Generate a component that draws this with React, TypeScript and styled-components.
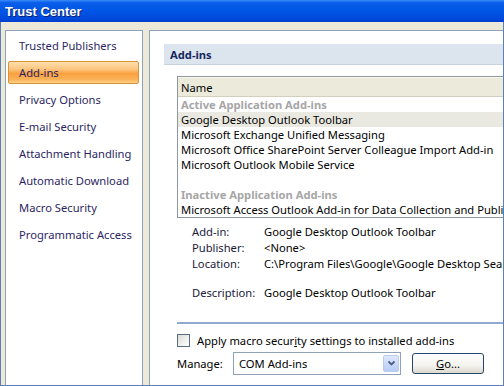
import React from 'react';
import styled, { createGlobalStyle } from 'styled-components';

const GlobalStyle = createGlobalStyle`
  html, body {
    margin: 0;
    padding: 0;
    background: #ece9d8;
  }
  body {
    font-family: 'Noto Sans', 'Open Sans', sans-serif;
    font-size: 11.2px;
    color: #000;
  }
`;

const Window = styled.div`
  width: 504px;
  height: 386px;
  display: flex;
  flex-direction: column;
  overflow: hidden;
`;

const TitleBar = styled.div`
  height: 22px;
  flex: none;
  display: flex;
  align-items: center;
  padding-left: 5px;
  background: linear-gradient(#3a8cf8 0%, #0a5eea 12%, #0055e5 50%, #0049dc 85%, #003ecf 100%);
  color: #fff;
  font-family: 'Liberation Sans', Arial, sans-serif;
  font-weight: bold;
  font-size: 13px;
  text-shadow: 1px 1px 0 #0a1f6b;
`;

const Frame = styled.div`
  flex: 1;
  display: flex;
  gap: 6px;
  padding: 8px 0 0 4px;
  border: 1px solid #5b80b4;
  border-top: none;
  background: #ece9d8;
  overflow: hidden;
  min-height: 0;
`;

const Sidebar = styled.div`
  width: 138px;
  flex: none;
  box-sizing: border-box;
  background: #fff;
  border: 1px solid #8ea3b8;
  border-bottom: none;
  padding: 1px 3px 0 2px;
`;

const NavItem = styled.div<{ $active?: boolean }>`
  height: ${p => (p.$active ? '23px' : '27px')};
  margin: ${p => (p.$active ? '2px 0 2px' : '0')};
  box-sizing: border-box;
  display: flex;
  align-items: center;
  padding-left: 10px;
  color: #2c1f63;
  white-space: nowrap;
  border-radius: 2px;
  border: 1px solid ${p => (p.$active ? '#d8943a' : 'transparent')};
  background: ${p =>
    p.$active
      ? 'linear-gradient(#fde0ad 0%, #fcc47d 35%, #f9a13f 55%, #fbb45a 85%, #fdd18b 100%)'
      : 'transparent'};
`;

const Panel = styled.div`
  flex: 1;
  min-width: 0;
  background: #fff;
  border: 1px solid #8ea3b8;
  border-bottom: none;
  border-right: none;
  padding: 13px 0 0 14px;
  overflow: hidden;
`;

const SectionHeader = styled.div`
  height: 21px;
  box-sizing: border-box;
  display: flex;
  align-items: center;
  padding-left: 6px;
  background: #dce5ee;
  border-bottom: 1px solid #c6d2de;
  color: #15285e;
  font-weight: bold;
`;

const Body = styled.div`
  padding-left: 13px;
`;

const ListBox = styled.div`
  margin-top: 11px;
  width: 360px;
  border: 1px solid #8f98a2;
  background: #fff;
`;

const ListHead = styled.div`
  height: 18px;
  display: flex;
  align-items: center;
  padding-left: 3px;
  background: #ebeadb;
  border-bottom: 1px solid #d3cfbe;
  border-top: 1px solid #f8f7f0;
`;

const ListRow = styled.div<{ $group?: boolean; $selected?: boolean }>`
  height: 15px;
  line-height: 15px;
  padding-left: 3px;
  white-space: nowrap;
  color: ${p => (p.$group ? '#a6a6a6' : '#000')};
  font-weight: ${p => (p.$group ? 'bold' : 'normal')};
  background: ${p => (p.$selected ? '#eae9e1' : 'transparent')};
`;

const Details = styled.div`
  margin-top: 5px;
  padding-left: 15px;
`;

const DetailRow = styled.div<{ $gap?: number }>`
  display: flex;
  height: 16px;
  align-items: center;
  white-space: nowrap;
  margin-top: ${p => p.$gap ?? 0}px;
`;

const DetailLabel = styled.span`
  width: 72px;
  flex: none;
  color: #1a1a3a;
`;

const Divider = styled.div`
  margin-top: 22px;
  height: 2px;
  background: #8eaad0;
`;

const CheckRow = styled.label`
  display: flex;
  align-items: center;
  gap: 7px;
  margin-top: 10px;
  height: 13px;
`;

const CheckBox = styled.span`
  width: 13px;
  height: 13px;
  box-sizing: border-box;
  border: 1px solid #5a6c84;
  background: linear-gradient(135deg, #dcdcd6, #fff);
  flex: none;
`;

const ManageRow = styled.div`
  display: flex;
  align-items: center;
  margin-top: 5px;
`;

const ManageLabel = styled.span`
  width: 56px;
  flex: none;
`;

const Select = styled.div`
  width: 168px;
  height: 23px;
  box-sizing: border-box;
  border: 1px solid #8ea3b8;
  display: flex;
  align-items: center;
  justify-content: space-between;
  padding: 0 1px 0 5px;
`;

const DropButton = styled.span`
  width: 16px;
  height: 17px;
  box-sizing: border-box;
  border: 1px solid #b8cbee;
  border-radius: 2px;
  background: linear-gradient(#dfe8fd, #b8ccf5);
  display: flex;
  align-items: center;
  justify-content: center;
`;

const GoButton = styled.button`
  margin-left: 11px;
  width: 72px;
  height: 21px;
  border: 1px solid #26456e;
  border-radius: 3px;
  background: linear-gradient(#ffffff 0%, #f4f3ee 60%, #dcd9cc 100%);
  font-family: inherit;
  font-size: inherit;
  color: #000;
  padding: 0;
`;

const navItems = [
  'Trusted Publishers',
  'Add-ins',
  'Privacy Options',
  'E-mail Security',
  'Attachment Handling',
  'Automatic Download',
  'Macro Security',
  'Programmatic Access',
];

const rows = [
  { text: 'Active Application Add-ins', group: true },
  { text: 'Google Desktop Outlook Toolbar', selected: true },
  { text: 'Microsoft Exchange Unified Messaging' },
  { text: 'Microsoft Office SharePoint Server Colleague Import Add-in' },
  { text: 'Microsoft Outlook Mobile Service' },
  { text: '' },
  { text: 'Inactive Application Add-ins', group: true },
  { text: 'Microsoft Access Outlook Add-in for Data Collection and Publishing' },
];

const App = () => (
  <>
    <GlobalStyle />
    <Window>
      <TitleBar>Trust Center</TitleBar>
      <Frame>
        <Sidebar>
          {navItems.map(item => (
            <NavItem key={item} $active={item === 'Add-ins'}>
              {item}
            </NavItem>
          ))}
        </Sidebar>
        <Panel>
          <SectionHeader>Add-ins</SectionHeader>
          <Body>
            <ListBox>
              <ListHead>Name</ListHead>
              {rows.map((r, i) => (
                <ListRow key={i} $group={r.group} $selected={r.selected}>
                  {r.text || '\u00a0'}
                </ListRow>
              ))}
            </ListBox>
            <Details>
              <DetailRow>
                <DetailLabel>Add-in:</DetailLabel>Google Desktop Outlook Toolbar
              </DetailRow>
              <DetailRow>
                <DetailLabel>Publisher:</DetailLabel>&lt;None&gt;
              </DetailRow>
              <DetailRow>
                <DetailLabel>Location:</DetailLabel>C:\Program Files\Google\Google Desktop Search\GoogleDesktopOutlook.dll
              </DetailRow>
              <DetailRow $gap={13}>
                <DetailLabel>Description:</DetailLabel>Google Desktop Outlook Toolbar
              </DetailRow>
            </Details>
            <Divider />
            <CheckRow>
              <CheckBox />
              <span>
                Apply macro secur<u>i</u>ty settings to installed add-ins
              </span>
            </CheckRow>
            <ManageRow>
              <ManageLabel>Manage:</ManageLabel>
              <Select>
                <span>COM Add-ins</span>
                <DropButton>
                  <svg width="9" height="7" viewBox="0 0 9 7">
                    <path d="M1.5 1.5 L4.5 4.5 L7.5 1.5" fill="none" stroke="#4d6185" strokeWidth="1.8" />
                  </svg>
                </DropButton>
              </Select>
              <GoButton>
                <u>G</u>o...
              </GoButton>
            </ManageRow>
          </Body>
        </Panel>
      </Frame>
    </Window>
  </>
);

export default App;
